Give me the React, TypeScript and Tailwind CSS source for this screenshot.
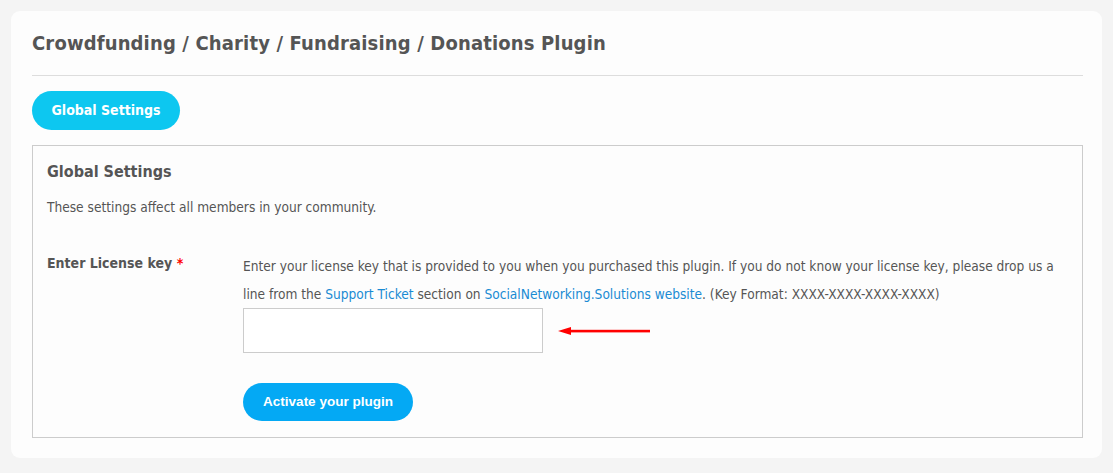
import React from "react";

export default function App() {
  const font = { fontFamily: '"DejaVu Sans Condensed", "DejaVu Sans", sans-serif' };
  return (
    <div className="min-h-[473px] w-full bg-[#f4f4f4] p-[11px] pr-[11px]" style={font}>
      <div className="rounded-[9px] bg-[#fdfdfd] pl-[21px] pr-[19px] pt-[20px] pb-[20px]">
        <h1 className="text-[20px] font-bold leading-[24px] text-[#555] tracking-[0.15px]">
          Crowdfunding / Charity / Fundraising / Donations Plugin
        </h1>
        <div className="mt-[20px] h-px bg-[#dddddd]" />
        <div className="mt-[15px]">
          <button className="h-[39px] w-[148px] rounded-full bg-[#0dc7f0] text-[14px] font-bold text-white">
            Global Settings
          </button>
        </div>
        <div className="mt-[15px] border border-[#cccccc] pl-[14px] pr-[15px] pt-[15px] pb-[16px]">
          <h2 className="text-[16px] font-bold leading-[22px] text-[#555]">Global Settings</h2>
          <p className="mt-[15px] text-[13.6px] leading-[19px] text-[#555]">
            These settings affect all members in your community.
          </p>
          <div className="mt-[35px] flex">
            <div className="w-[196px] shrink-0 pt-[1px] text-[14px] font-bold leading-[20px] text-[#555]">
              Enter License key <span className="text-[#ff0000]">*</span>
            </div>
            <div className="flex-1">
              <p className="text-[13.6px] leading-[28px] text-[#555]">
                Enter your license key that is provided to you when you purchased this plugin. If you do not know your license key, please drop us a line from the{" "}
                <a className="text-[#1a8bd3]">Support Ticket</a> section on{" "}
                <a className="text-[#1a8bd3]">SocialNetworking.Solutions website</a>. (Key Format: XXXX-XXXX-XXXX-XXXX)
              </p>
              <div className="flex items-center">
                <input className="h-[45px] w-[300px] border border-[#cccccc] bg-white outline-none" />
                <svg width="96" height="10" viewBox="0 0 96 10" className="ml-[15px]">
                  <polygon points="0,5 13,1 13,9" fill="#ff0000" />
                  <rect x="12" y="3.8" width="80" height="2.6" fill="#ff0000" />
                </svg>
              </div>
              <button
                className="mt-[30px] h-[38px] w-[170px] rounded-full bg-[#04a9f4] text-[13.5px] font-bold text-white"
                style={{ fontFamily: '"Liberation Sans", Arial, sans-serif' }}
              >
                Activate your plugin
              </button>
            </div>
          </div>
        </div>
      </div>
    </div>
  );
}
